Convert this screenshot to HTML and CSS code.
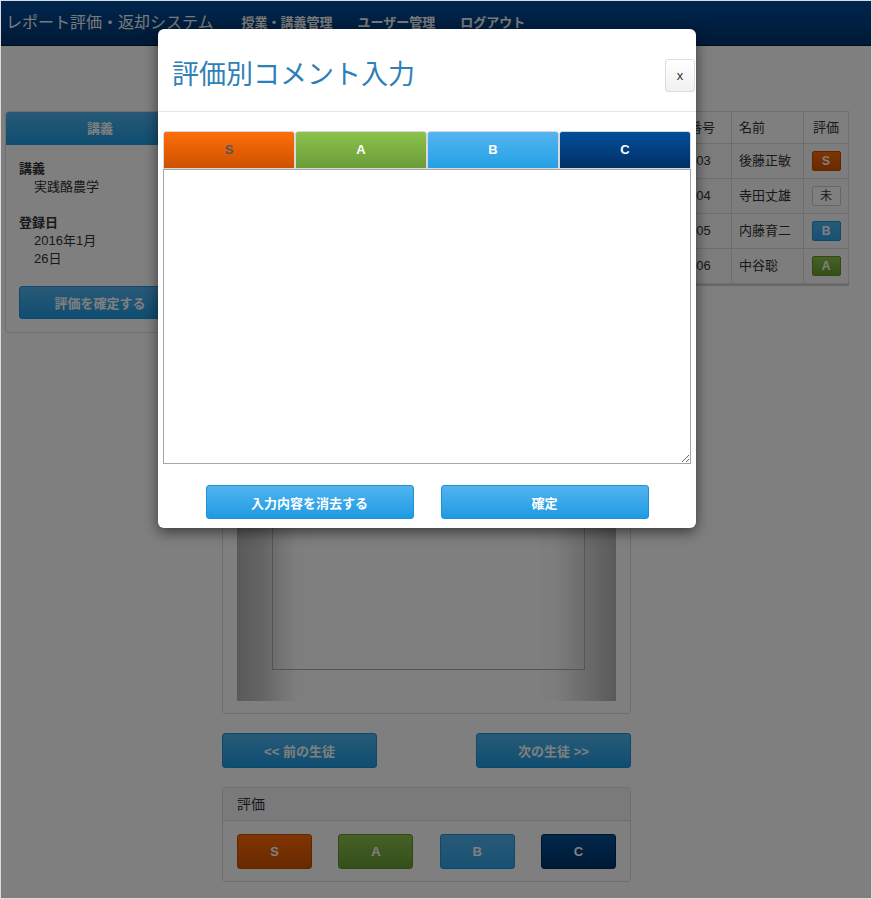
FILE: index.html
```html
<!DOCTYPE html>
<html lang="ja">
<head>
<meta charset="utf-8">
<title>評価別コメント入力</title>
<link rel="stylesheet" href="styles.css">
</head>
<body>
<div class="frame">
  <header class="navbar">
    <span class="brand">レポート評価・返却システム</span>
    <nav class="nav">
      <a class="nav-link">授業・講義管理</a>
      <a class="nav-link">ユーザー管理</a>
      <a class="nav-link">ログアウト</a>
    </nav>
  </header>

  <main class="main">
    <aside class="side panel">
      <div class="panel-head">講義</div>
      <div class="side-body">
        <div class="label">講義</div>
        <div class="val">実践酪農学</div>
        <div class="label gap">登録日</div>
        <div class="val">2016年1月<br>26日</div>
        <button class="btn btn-blue btn-block">評価を確定する</button>
      </div>
    </aside>

    <section class="center">
      <div class="doc-panel">
        <div class="doc">
          <div class="doc-page"></div>
        </div>
      </div>
      <div class="pager">
        <button class="btn btn-blue btn-pager">&lt;&lt; 前の生徒</button>
        <button class="btn btn-blue btn-pager">次の生徒 &gt;&gt;</button>
      </div>
      <div class="eval-panel">
        <div class="eval-head">評価</div>
        <div class="eval-body">
          <button class="btn grade grade-s">S</button>
          <button class="btn grade grade-a">A</button>
          <button class="btn grade grade-b">B</button>
          <button class="btn grade grade-c">C</button>
        </div>
      </div>
    </section>

    <section class="right">
      <table class="students">
        <thead>
          <tr><th class="c-num">番号</th><th class="c-name">名前</th><th class="c-grade">評価</th></tr>
        </thead>
        <tbody>
          <tr><td class="c-num">003</td><td>後藤正敏</td><td class="c-grade"><span class="badge b-s">S</span></td></tr>
          <tr><td class="c-num">004</td><td>寺田丈雄</td><td class="c-grade"><span class="badge b-none">未</span></td></tr>
          <tr><td class="c-num">005</td><td>内藤育二</td><td class="c-grade"><span class="badge b-b">B</span></td></tr>
          <tr><td class="c-num">006</td><td>中谷聡</td><td class="c-grade"><span class="badge b-a">A</span></td></tr>
        </tbody>
      </table>
    </section>
  </main>

  <div class="overlay"></div>

  <div class="modal">
    <div class="modal-head">
      <h1 class="modal-title">評価別コメント入力</h1>
      <button class="close">x</button>
    </div>
    <div class="modal-body">
      <div class="tabs">
        <div class="tab tab-s">S</div>
        <div class="tab tab-a">A</div>
        <div class="tab tab-b">B</div>
        <div class="tab tab-c">C</div>
      </div>
      <textarea class="comment"></textarea>
    </div>
    <div class="modal-foot">
      <button class="btn btn-blue btn-modal">入力内容を消去する</button>
      <button class="btn btn-blue btn-modal">確定</button>
    </div>
  </div>
</div>
</body>
</html>
```

FILE: styles.css
```css
* { box-sizing: border-box; }

html, body {
  margin: 0;
  padding: 0;
  background: #fff;
}

body {
  font-family: "Liberation Sans", "Noto Sans CJK JP", sans-serif;
  font-size: 13px;
  line-height: 18px;
  color: #333;
}

.frame {
  position: relative;
  width: 872px;
  height: 899px;
  border: 1px solid #dcdcdc;
  overflow: hidden;
  background: #fff;
}

/* ---------- navbar ---------- */
.navbar {
  height: 45px;
  display: flex;
  align-items: center;
  padding-left: 5px;
  background: linear-gradient(#004c9e, #00336c);
  border-bottom: 1px solid #001a38;
}

.brand {
  font-size: 16px;
  color: #f2f2f2;
  margin-right: 28px;
  white-space: nowrap;
}

.nav {
  display: flex;
  gap: 25px;
}

.nav-link {
  font-size: 13px;
  font-weight: bold;
  color: #f2f2f2;
  white-space: nowrap;
}

/* ---------- main layout ---------- */
.main {
  display: flex;
  align-items: flex-start;
  padding: 65px 0 0 4px;
}

.panel {
  border: 1px solid #dddddd;
  border-radius: 4px;
  background: #fff;
}

.side {
  width: 190px;
}

.panel-head {
  height: 33px;
  line-height: 33px;
  text-align: center;
  font-weight: bold;
  color: #fff;
  background: linear-gradient(#4fb3ec, #1e9be3);
  border-radius: 3px 3px 0 0;
}

.side-body {
  padding: 15px 13px 13px 13px;
}

.label {
  font-weight: bold;
}

.label.gap {
  margin-top: 18px;
}

.val {
  padding-left: 15px;
}

.btn {
  font-family: "Liberation Sans", "Noto Sans CJK JP", sans-serif;
  font-size: 13px;
  font-weight: bold;
  color: #fff;
  border-radius: 3px;
  padding: 0;
  cursor: pointer;
}

.btn-blue {
  background: linear-gradient(#51b4ee, #1e9be4);
  border: 1px solid #1d92d8;
}

.btn-block {
  display: block;
  width: 162px;
  height: 33px;
  margin-top: 18px;
}

/* ---------- center ---------- */
.center {
  width: 409px;
  margin-left: 27px;
}

.doc-panel {
  border: 1px solid #dddddd;
  border-radius: 4px;
  padding: 14px 14px 12px 14px;
}

.doc {
  height: 575px;
  padding: 40px 31px 31px 35px;
  background: linear-gradient(to right, #b4b4b4 0, #c8c8c8 25px, #e8e8e8 45px, #fcfcfc 60px, #ffffff 80px, #ffffff calc(100% - 80px), #f8f8f8 calc(100% - 60px), #dcdcdc calc(100% - 35px), #b4b4b4 100%);
}

.doc-page {
  height: 100%;
  border: 1px solid #a8a8a8;
}

.pager {
  display: flex;
  justify-content: space-between;
  margin-top: 19px;
}

.btn-pager {
  width: 155px;
  height: 35px;
}

.eval-panel {
  margin-top: 19px;
  border: 1px solid #dddddd;
  border-radius: 4px;
}

.eval-head {
  height: 33px;
  line-height: 32px;
  padding-left: 14px;
  font-size: 14px;
  background: #f5f5f5;
  border-bottom: 1px solid #dddddd;
  border-radius: 3px 3px 0 0;
}

.eval-body {
  display: flex;
  justify-content: space-between;
  padding: 13px 14px 12px 14px;
}

.grade {
  width: 75px;
  height: 35px;
}

.grade-s { background: linear-gradient(#ff6a06, #d25300); border: 1px solid #c24d00; }
.grade-a { background: linear-gradient(#8bc34a, #6b9e35); border: 1px solid #64932f; }
.grade-b { background: linear-gradient(#51b4ee, #2fa2e6); border: 1px solid #1d92d8; }
.grade-c { background: linear-gradient(#024e98, #01326a); border: 1px solid #012a5a; }

/* ---------- right table ---------- */
.right {
  width: 168px;
  margin-left: 50px;
}

.students {
  width: 100%;
  border-collapse: collapse;
  border: 1px solid #dddddd;
  box-shadow: 0 2px 0 #d0d0d0;
}

.students th,
.students td {
  border: 1px solid #dddddd;
  padding: 0 7px;
  text-align: left;
  font-weight: normal;
  white-space: nowrap;
}

.students th { height: 32px; }
.students td { height: 35px; background: #fbfbfb; }

.students .c-num { width: 50px; }
.students .c-grade { width: 45px; text-align: center; padding: 0; }

.badge {
  display: inline-block;
  width: 29px;
  height: 20px;
  line-height: 18px;
  border-radius: 2px;
  font-size: 12px;
  font-weight: bold;
  color: #fff;
  text-align: center;
  vertical-align: middle;
}

.b-s { background: linear-gradient(#ff6a06, #d25300); border: 1px solid #c24d00; }
.b-a { background: linear-gradient(#8bc34a, #6b9e35); border: 1px solid #64932f; }
.b-b { background: linear-gradient(#51b4ee, #2fa2e6); border: 1px solid #1d92d8; }
.b-none { background: #fff; border: 1px solid #cccccc; color: #333; font-weight: normal; }

/* ---------- overlay & modal ---------- */
.overlay {
  position: absolute;
  inset: 0;
  background: rgba(0, 0, 0, 0.5);
}

.modal {
  position: absolute;
  left: 157px;
  top: 28px;
  width: 538px;
  background: #fff;
  border-radius: 6px;
  box-shadow: 0 4px 14px rgba(0, 0, 0, 0.55);
}

.modal-head {
  display: flex;
  align-items: center;
  justify-content: space-between;
  padding: 30px 1px 19px 14px;
  border-bottom: 1px solid #e5e5e5;
}

.modal-title {
  margin: 0;
  font-size: 27px;
  line-height: 33px;
  font-weight: normal;
  color: #2f7fb9;
}

.close {
  width: 30px;
  height: 33px;
  padding: 0;
  border: 1px solid #dddddd;
  border-radius: 3px;
  background: linear-gradient(#ffffff, #f1f1f1);
  font-family: "Liberation Sans", sans-serif;
  font-size: 13px;
  color: #333;
}

.modal-body {
  padding: 19px 5px 0 5px;
}

.tabs {
  display: flex;
}

.tab {
  width: 132px;
  height: 38px;
  line-height: 36px;
  text-align: center;
  font-weight: bold;
  font-size: 13px;
  color: #fff;
  border: 1px solid #d9d9d9;
  border-radius: 3px 3px 0 0;
}

.tab-s { background: linear-gradient(#ff6d0a, #cc5200); color: #555; }
.tab-a { background: linear-gradient(#8cc24c, #6a9c38); }
.tab-b { background: linear-gradient(#53b5ef, #24a0e6); }
.tab-c { background: linear-gradient(#024e98, #013068); }

.comment {
  display: block;
  width: 528px;
  height: 295px;
  margin: 0;
  border: 1px solid #a6a6a6;
  padding: 2px;
  font-family: "Liberation Sans", "Noto Sans CJK JP", sans-serif;
  font-size: 13px;
  resize: both;
}

.modal-foot {
  display: flex;
  justify-content: center;
  gap: 27px;
  padding: 21px 0 9px 0;
}

.btn-modal {
  width: 208px;
  height: 34px;
}
```
